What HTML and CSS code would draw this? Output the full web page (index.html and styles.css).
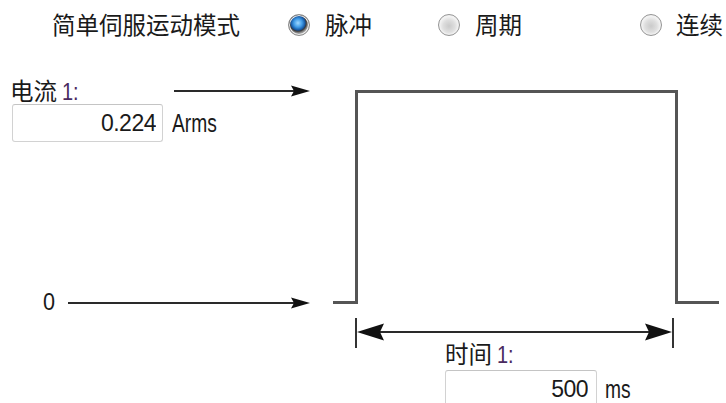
FILE: index.html
```html
<!DOCTYPE html>
<html lang="zh-CN">
<head>
    <meta charset="UTF-8">
    <title>简单伺服运动模式</title>
    <meta name="viewport" content="width=device-width, initial-scale=1.0">
    <link rel="stylesheet" href="styles.css">
</head>
<body>
<div class="page">
    <!-- fila superior: modo y opciones -->
    <div class="mode-row">
        <span class="mode-title">简单伺服运动模式</span>
        <label class="option opt-pulse"><span class="radio checked"></span>脉冲</label>
        <label class="option opt-cycle"><span class="radio"></span>周期</label>
        <label class="option opt-cont"><span class="radio"></span>连续</label>
    </div>

    <!-- diagrama del pulso -->
    <div class="diagram">
        <svg class="wave" width="726" height="353" viewBox="0 50 726 353">
            <!-- flecha de corriente -->
            <line x1="174" y1="91" x2="296" y2="91" class="arrow-line"/>
            <path d="M291,85.5 L310,91 L291,96.5 L294,91 Z" class="arrow-head"/>
            <!-- flecha de cero -->
            <line x1="68" y1="303" x2="296" y2="303" class="arrow-line"/>
            <path d="M291,297.5 L310,303 L291,308.5 L294,303 Z" class="arrow-head"/>
            <!-- pulso -->
            <path d="M333,302.5 H356.5 V91.5 H676.5 V302.5 H719" class="pulse"/>
            <!-- cota de tiempo -->
            <line x1="356" y1="318" x2="356" y2="348" class="tick"/>
            <line x1="673" y1="318" x2="673" y2="348" class="tick"/>
            <line x1="370" y1="332" x2="660" y2="332" class="arrow-line"/>
            <path d="M357,332 L384,323.5 L380,332 L384,340.5 Z" class="arrow-head"/>
            <path d="M672,332 L645,323.5 L649,332 L645,340.5 Z" class="arrow-head"/>
        </svg>

        <div class="field field-current">
            <div class="field-label">电流 <span class="num">1:</span></div>
            <div class="field-row">
                <input type="text" class="value" value="0.224">
                <span class="unit">Arms</span>
            </div>
        </div>

        <div class="zero-label">0</div>

        <div class="field field-time">
            <div class="field-label">时间 <span class="num">1:</span></div>
            <div class="field-row">
                <input type="text" class="value" value="500">
                <span class="unit">ms</span>
            </div>
        </div>
    </div>
</div>
</body>
</html>
```

FILE: styles.css
```css
* {
    box-sizing: border-box;
}

body {
    margin: 0;
    background-color: #fff;
    font-family: "Liberation Sans", "Noto Sans CJK SC", sans-serif;
    font-size: 23.5px;
    color: #1a1a1a;
}

.page {
    width: 726px;
    height: 403px;
    overflow: hidden;
}

.mode-row {
    display: grid;
    grid-template-columns: 236px 150px 202px auto;
    align-items: center;
    height: 50px;
    padding-left: 52px;
    line-height: 1;
    white-space: nowrap;
}

.mode-title,
.option {
    font-family: "Noto Sans CJK SC", sans-serif;
}

.option {
    display: flex;
    align-items: center;
    gap: 15px;
}

.opt-cont {
    gap: 14px;
}

.radio {
    display: inline-block;
    width: 22px;
    height: 22px;
    flex: none;
    border-radius: 50%;
    border: 1px solid #959595;
    background: radial-gradient(circle at 50% 55%, #cacaca 0, #dedede 40%, #f8f8f8 70%, #d6d6d6 100%);
    box-shadow: inset 0 0 0 1px #f0f0f0;
}

.radio.checked {
    border-color: #8a8a8a;
    background: radial-gradient(circle at 45% 40%, #9fd8ff 0, #3f9ae6 26%, #15549e 44%, #3a3a3a 50%, #8a8a8a 60%, #e0e0e0 78%, #f2f2f2 100%);
}

.diagram {
    position: relative;
    height: 353px;
}

.wave {
    position: absolute;
    left: 0;
    top: 0;
    display: block;
}

.arrow-line {
    stroke: #2a2a2a;
    stroke-width: 2;
}

.arrow-head {
    fill: #111;
}

.pulse {
    fill: none;
    stroke: #555;
    stroke-width: 3;
}

.tick {
    stroke: #333;
    stroke-width: 2;
}

.field {
    position: absolute;
    display: flex;
    flex-direction: column;
}

.field-current {
    left: 10px;
    top: 28px;
}

.field-time {
    left: 445px;
    top: 291px;
}

.field-label {
    font-family: "Noto Sans CJK SC", sans-serif;
    line-height: 24px;
    height: 24px;
    white-space: nowrap;
}

.field-label .num {
    display: inline-block;
    font-family: "Liberation Sans", sans-serif;
    color: #4a2a5e;
    transform: scaleX(0.85);
    transform-origin: left center;
}

.field-row {
    display: flex;
    align-items: center;
    gap: 9px;
}

.field-current .field-row {
    margin-top: 2px;
    margin-left: 2px;
}

.field-time .field-row {
    margin-top: 5px;
    gap: 8px;
}

.value {
    width: 151px;
    height: 38px;
    padding: 0 6px 0 4px;
    border: 1px solid #d2d2d2;
    border-top-color: #c4c4c4;
    border-radius: 3px;
    background-color: #fff;
    font-family: "Liberation Sans", sans-serif;
    font-size: 23px;
    letter-spacing: -0.5px;
    color: #1a1a1a;
    text-align: right;
    outline: none;
}

.field-time .value {
    width: 152px;
    padding-right: 8px;
}

.unit {
    display: inline-block;
    font-size: 25px;
    white-space: nowrap;
    transform: scaleX(0.77);
    transform-origin: left center;
}

.zero-label {
    position: absolute;
    left: 43px;
    top: 240px;
    font-size: 24px;
    line-height: 24px;
    transform: scaleX(0.9);
    transform-origin: left center;
}
```
